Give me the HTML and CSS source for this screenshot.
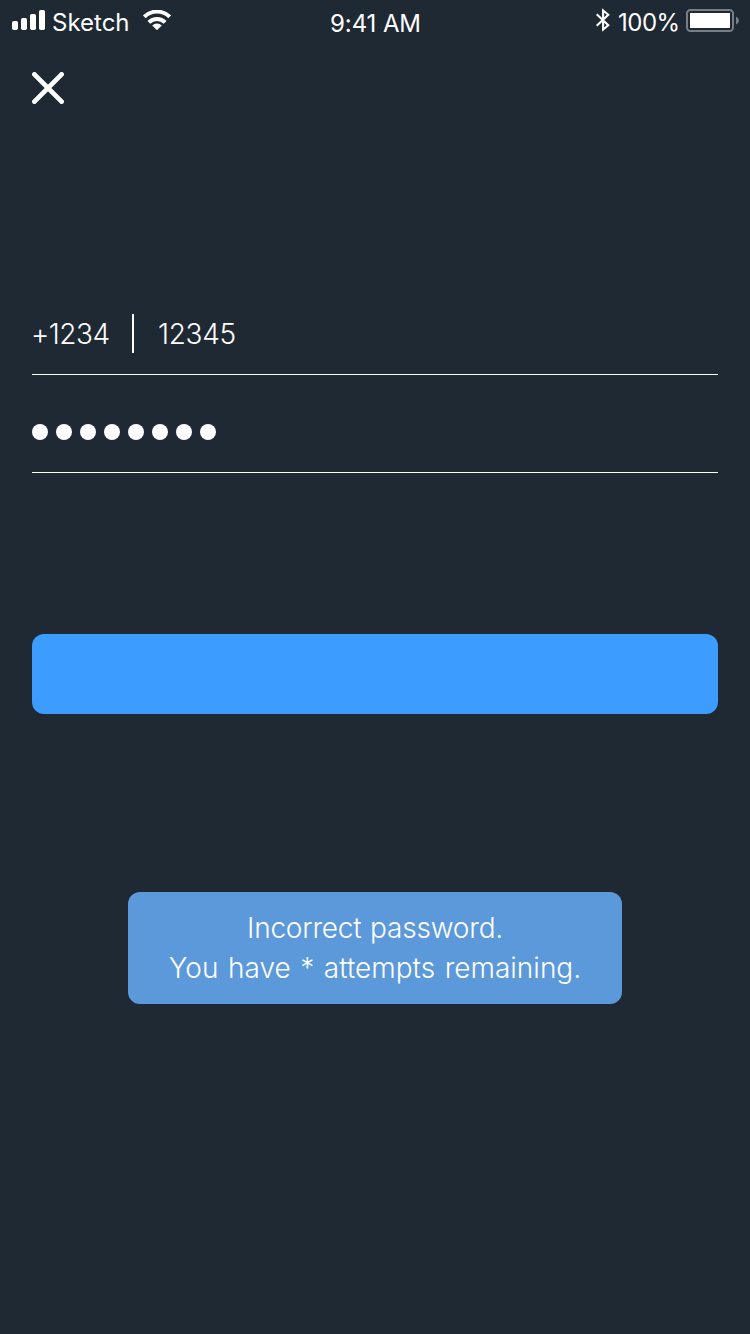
FILE: index.html
```
<!DOCTYPE html>
<html lang="en">
<head>
<meta charset="utf-8">
<title>Sign in</title>
<link rel="stylesheet" href="styles.css">
</head>
<body>
<main class="screen">
  <header class="status">
    <div class="status-left">
      <svg class="signal" width="33" height="20" viewBox="0 0 33 20" fill="#fff"><rect y="11" width="6" height="9" rx="1.7"/><rect x="9" y="8" width="6" height="12" rx="1.7"/><rect x="18" y="4" width="6" height="16" rx="1.7"/><rect x="27" width="6" height="20" rx="1.7"/></svg>
      <span class="carrier">Sketch</span>
      <svg class="wifi" width="28" height="20" viewBox="0 0 28 20"><path d="M1.3 6.8A18 18 0 0 1 26.7 6.8M5.9 12.4A11.3 11.3 0 0 1 22.1 12.4" fill="none" stroke="#fff" stroke-width="4"/><path d="M9.2 15.6A6.6 6.6 0 0 1 18.8 15.6L14 20.2Z" fill="#fff"/></svg>
    </div>
    <span class="clock">9:41 AM</span>
    <div class="status-right">
      <svg class="bluetooth" width="14" height="24" viewBox="0 0 14 24" fill="none" stroke="#fff" stroke-width="2.1"><path d="M.7 6.2 12.3 17.2 7.1 21.6V2.4L12.3 6.8.7 17.8"/></svg>
      <span class="charge">100%</span>
      <svg class="battery" width="53" height="23" viewBox="0 0 53 23"><rect x="1" y="1" width="46" height="21" rx="3.5" fill="none" stroke="#797e85" stroke-width="2"/><rect x="4" y="4" width="40" height="15" fill="#fff"/><path d="M50 7.5Q53 9 53 11.5T50 15.5Z" fill="#797e85"/></svg>
    </div>
  </header>
  <button class="close" aria-label="Close"><svg width="32" height="32" viewBox="0 0 32 32"><path d="M2.4 2.4 29.6 29.6M29.6 2.4 2.4 29.6" stroke="#fff" stroke-width="4.8" stroke-linecap="round"/></svg></button>
  <section class="form">
    <div class="field phone"><span class="code">+1234</span><i class="divider"></i><span class="number">12345</span></div>
    <div class="field password"><i class="dot"></i><i class="dot"></i><i class="dot"></i><i class="dot"></i><i class="dot"></i><i class="dot"></i><i class="dot"></i><i class="dot"></i></div>
    <button class="submit" aria-label="Sign in"></button>
  </section>
  <div class="toast"><p class="line-one">Incorrect password.</p><p class="line-two">You have * attempts remaining.</p></div>
</main>
</body>
</html>
```
FILE: styles.css
```
* { box-sizing: border-box; }
body { margin: 0; background: #1f2934; color: #fff; font-family: Inter, "Liberation Sans", sans-serif; }
.screen { display: flex; flex-direction: column; width: 750px; height: 1334px; }
.status { display: grid; grid-template-columns: 1fr auto 1fr; height: 40px; padding: 0 11px 0 12px; font-size: 24px; line-height: 30px; font-weight: 400; white-space: nowrap; }
.status svg { display: block; flex: none; }
.status-left, .status-right { display: flex; align-items: flex-start; }
.status-right { justify-content: flex-end; }
.signal { margin-top: 10px; }
.carrier { margin: 8px 0 0 7px; width: 91px; letter-spacing: 0; }
.wifi { margin-top: 10px; }
.clock { margin-top: 9px; letter-spacing: -.1px; }
.bluetooth { margin: 8px 8px 0 0; }
.charge { margin-top: 8px; width: 68px; letter-spacing: -.5px; }
.battery { margin-top: 9px; }
.close { width: 32px; height: 32px; margin: 32px 0 0 32px; padding: 0; border: 0; background: none; }
.close svg { display: block; }
.form { margin: 190px 32px 0; }
.field { display: flex; border-bottom: 1px solid #fff; }
.phone { height: 81px; padding-top: 20px; font-size: 28px; font-weight: 300; line-height: 40px; }
.code { width: 101px; margin-left: -1px; letter-spacing: -.5px; }
.number { letter-spacing: -.3px; }
.divider { width: 2px; height: 39px; background: #fff; margin-right: 24px; }
.password { height: 98px; padding-top: 49px; gap: 8px; }
.dot { width: 16px; height: 16px; border-radius: 50%; background: #fff; }
.submit { display: block; width: 100%; height: 80px; margin-top: 161px; border: 0; border-radius: 12px; background: #3d9cff; }
.toast { width: 494px; height: 112px; margin: 178px auto 0; padding-top: 16px; border-radius: 12px; background: #5b99da; text-align: center; font-size: 28px; line-height: 40px; font-weight: 300; white-space: nowrap; }
.toast p { margin: 0; }
.line-one { letter-spacing: -.2px; word-spacing: 1px; }
.line-two { word-spacing: 1.7px; }
```
